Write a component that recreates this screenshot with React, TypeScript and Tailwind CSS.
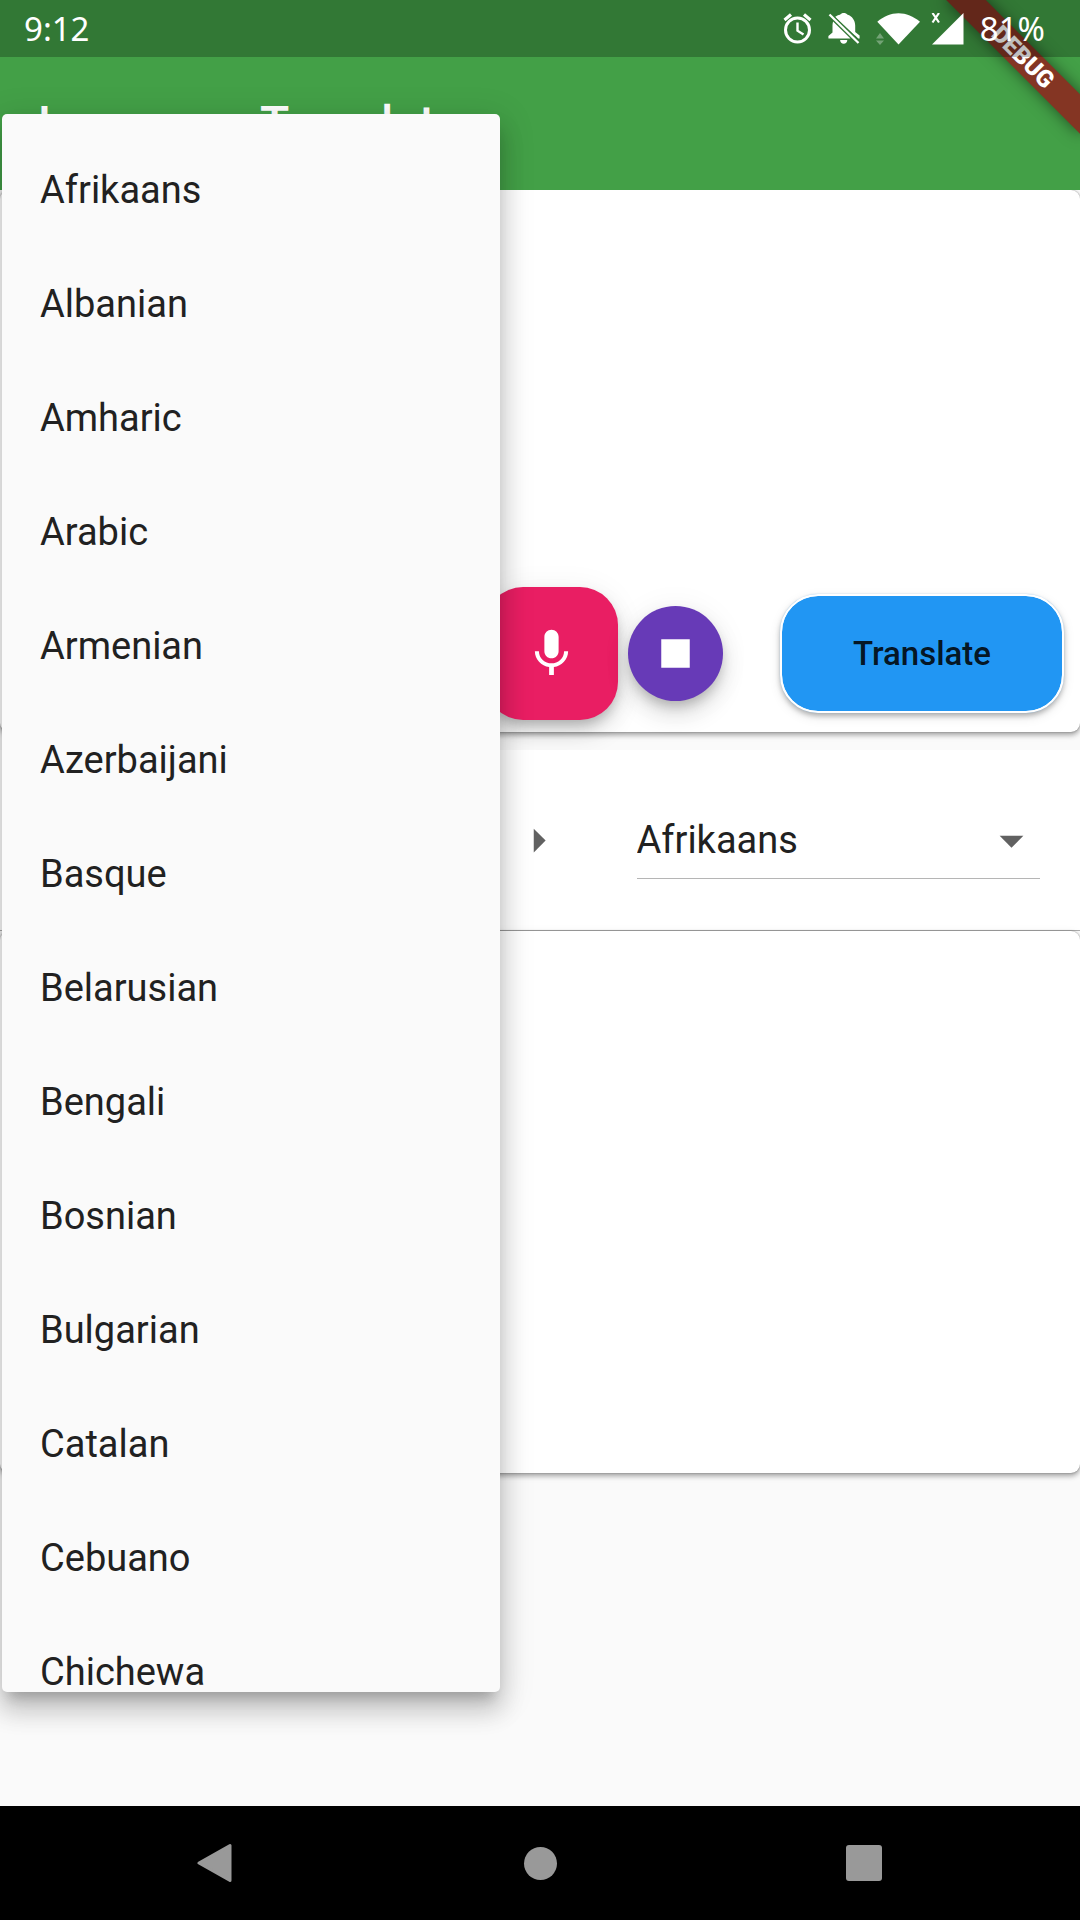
import React from 'react';

const LANGUAGES = [
  'Afrikaans', 'Albanian', 'Amharic', 'Arabic', 'Armenian', 'Azerbaijani', 'Basque',
  'Belarusian', 'Bengali', 'Bosnian', 'Bulgarian', 'Catalan', 'Cebuano', 'Chichewa',
];

const CARD =
  'relative rounded-[9px] bg-white shadow-[0_0_2px_rgba(0,0,0,0.35),0_3px_5px_rgba(0,0,0,0.3),0_2px_10px_rgba(0,0,0,0.08)]';
const FAB =
  'flex items-center justify-center text-white shadow-[0_7px_12px_-2px_rgba(0,0,0,0.2),0_14px_24px_rgba(0,0,0,0.12),0_2px_32px_rgba(0,0,0,0.06)]';

function AlarmIcon() {
  return (
    <svg width="29" height="31" viewBox="0 0 29 31" fill="none" stroke="white" aria-hidden="true">
      <circle cx="14.5" cy="17" r="12" strokeWidth="3" />
      <path d="M1.5 7 8 1.6M27.5 7 21 1.6" strokeWidth="3.2" />
      <path d="M14.5 9.5v8.2l6 3.8" strokeWidth="2.4" />
    </svg>
  );
}

function BellOffIcon() {
  return (
    <svg width="32" height="32" viewBox="0 0 32 32" aria-hidden="true">
      <path
        fill="white"
        d="M7 3.900C8.500 2.800 10.200 2 12 1.700 13 .7 14.200 0 15.800 0s2.800.7 3.800 1.700C24 3 27.200 7.300 27.200 12.500v10.300zM5.100 8.400 22.500 25.500H.4v-2.600l4.100-3.300v-7c0-1.500.2-2.900.6-4.200zM27.200 19l4.400 3.500v3h-1.400l-3-3zM12.100 27h7.200c0 2.200-1.600 3.700-3.600 3.700s-3.600-1.500-3.600-3.700z"
      />
      <path d="M2 .5 31 29" stroke="#327835" strokeWidth="2.500" />
      <path d="M1.500 1.500 30.500 30" stroke="white" strokeWidth="2.300" />
    </svg>
  );
}

function WifiIcon() {
  return (
    <svg width="45" height="32" viewBox="0 0 45 32" aria-hidden="true">
      <path fill="white" d="M1.300 8.800C7.500 3.200 15 .2 22.500.2S37.500 3.200 44 8.800L22.500 31.600z" />
      <path fill="white" fillOpacity=".32" d="M0 25.500 4 20l4 5.500zM0 27.500h8L4 32z" />
    </svg>
  );
}

function SignalIcon() {
  return (
    <svg width="33" height="32" viewBox="0 0 33 32" aria-hidden="true">
      <path fill="white" d="M32.500 0v31.500H1z" />
      <path d="M1.500 0 8 9.500M8 0 1.500 9.500" stroke="white" strokeWidth="2.200" />
    </svg>
  );
}

function LanguageSelect({ label }: { label: string }) {
  return (
    <div className="relative min-w-0 flex-1 border-b border-[#b5b5b5]">
      <select
        aria-label={label}
        className="block h-[76px] w-full appearance-none bg-transparent pt-0.5 text-[38px] text-[#212121] outline-none"
      >
        {LANGUAGES.map((l) => (
          <option key={l}>{l}</option>
        ))}
      </select>
      <svg
        className="pointer-events-none absolute top-2.5 right-0 size-[57px] fill-[#616161]"
        viewBox="0 0 24 24"
        aria-hidden="true"
      >
        <path d="M7 10l5 5 5-5z" />
      </svg>
    </div>
  );
}

export default function App() {
  return (
    <div className="relative flex min-h-screen flex-col overflow-hidden bg-[#fafafa] font-[Roboto,sans-serif] text-[#212121]">
      <header className="relative bg-[#43a047] text-white">
        <div className="absolute top-[43px] right-[-38px] flex h-[28px] w-[190px] rotate-45 items-center justify-center bg-[#843523] text-[24px] leading-none font-black shadow-[0_0_16px_rgba(0,0,0,0.5)]">
          DEBUG
        </div>
        <div className="relative flex h-[57px] items-center justify-between bg-black/25 pr-[35px] pl-6 font-['Noto_Sans',sans-serif] text-[33px] leading-none">
          <span>9:12</span>
          <div className="flex items-center gap-4">
            <AlarmIcon />
            <BellOffIcon />
            <WifiIcon />
            <div className="-ml-1.5">
              <SignalIcon />
            </div>
            <span>81%</span>
          </div>
        </div>
        <div className="flex h-[133px] items-center px-[38px]">
          <h1 className="text-[48px] leading-none font-medium">Language Translator</h1>
        </div>
      </header>

      <main className="flex-1 overflow-hidden">
        <section className={CARD}>
          <textarea
            aria-label="Text to translate"
            className="block h-[397px] w-full resize-none bg-transparent p-6 text-[38px] outline-none"
          />
          <div className="flex items-center justify-end pr-4 pb-3">
            <button type="button" aria-label="Speak" className={`${FAB} size-[133px] rounded-[38px] bg-[#e91e63]`}>
              <svg className="size-[57px] fill-white" viewBox="0 0 24 24" aria-hidden="true">
                <path d="M12 14c1.660 0 2.990-1.340 2.990-3L15 5c0-1.660-1.340-3-3-3S9 3.340 9 5v6c0 1.660 1.340 3 3 3zm5.300-3c0 3-2.540 5.100-5.300 5.100S6.700 14 6.700 11H5c0 3.410 2.720 6.230 6 6.720V21h2v-3.280c3.280-.48 6-3.300 6-6.720h-1.700z" />
              </svg>
            </button>
            <button type="button" aria-label="Stop" className={`${FAB} ml-2.5 size-[95px] rounded-full bg-[#673ab7]`}>
              <svg className="size-[57px] fill-white" viewBox="0 0 24 24" aria-hidden="true">
                <path d="M6 6h12v12H6z" />
              </svg>
            </button>
            <button
              type="button"
              className="ml-[57px] h-[119px] w-[284px] rounded-[38px] border-2 border-white bg-[#2196f3] bg-clip-padding text-[33px] font-medium text-black/87 shadow-[0_0_1px_rgba(33,150,243,0.5),0_3px_5px_rgba(0,0,0,0.25),0_4px_12px_rgba(0,0,0,0.1)]"
            >
              Translate
            </button>
          </div>
        </section>

        <section className="relative mt-[18px] flex h-[181px] items-center gap-[70px] border-b border-[#adadad] bg-white pr-10 pl-9">
          <LanguageSelect label="Translate from" />
          <svg className="size-[57px] fill-[#616161]" viewBox="0 0 24 24" aria-hidden="true">
            <path d="M10 17l5-5-5-5v10z" />
          </svg>
          <LanguageSelect label="Translate to" />
        </section>

        <section className={CARD}>
          <textarea
            aria-label="Translation"
            readOnly
            className="block h-[542px] w-full resize-none bg-transparent p-6 text-[38px] outline-none"
          />
        </section>
      </main>

      <nav className="flex h-[114px] items-center bg-black px-[5%]">
        <button type="button" aria-label="Back" className="flex flex-1 justify-center">
          <svg width="38" height="40" viewBox="0 0 38 40" aria-hidden="true">
            <path d="M33 2.500v35L2 20z" fill="#999" stroke="#999" strokeWidth="3" strokeLinejoin="round" />
          </svg>
        </button>
        <button type="button" aria-label="Home" className="flex flex-1 justify-center">
          <span className="size-[33px] rounded-full bg-[#999]" />
        </button>
        <button type="button" aria-label="Recent apps" className="flex flex-1 justify-center">
          <span className="size-[36px] rounded-[3px] bg-[#999]" />
        </button>
      </nav>

      <ul
        role="listbox"
        aria-label="Languages"
        className="absolute top-[114px] bottom-[228px] left-0.5 w-[498px] overflow-hidden rounded-[5px] bg-[#fafafa] py-[19px] shadow-[0_12px_12px_-7px_rgba(0,0,0,0.2),0_19px_24px_2px_rgba(0,0,0,0.14),0_7px_33px_5px_rgba(0,0,0,0.12)]"
      >
        {LANGUAGES.map((l, i) => (
          <li key={l} role="option" aria-selected={i === 0}>
            <button type="button" className="flex h-[114px] w-full items-center px-[38px] text-[38px] leading-none">
              {l}
            </button>
          </li>
        ))}
      </ul>
    </div>
  );
}
